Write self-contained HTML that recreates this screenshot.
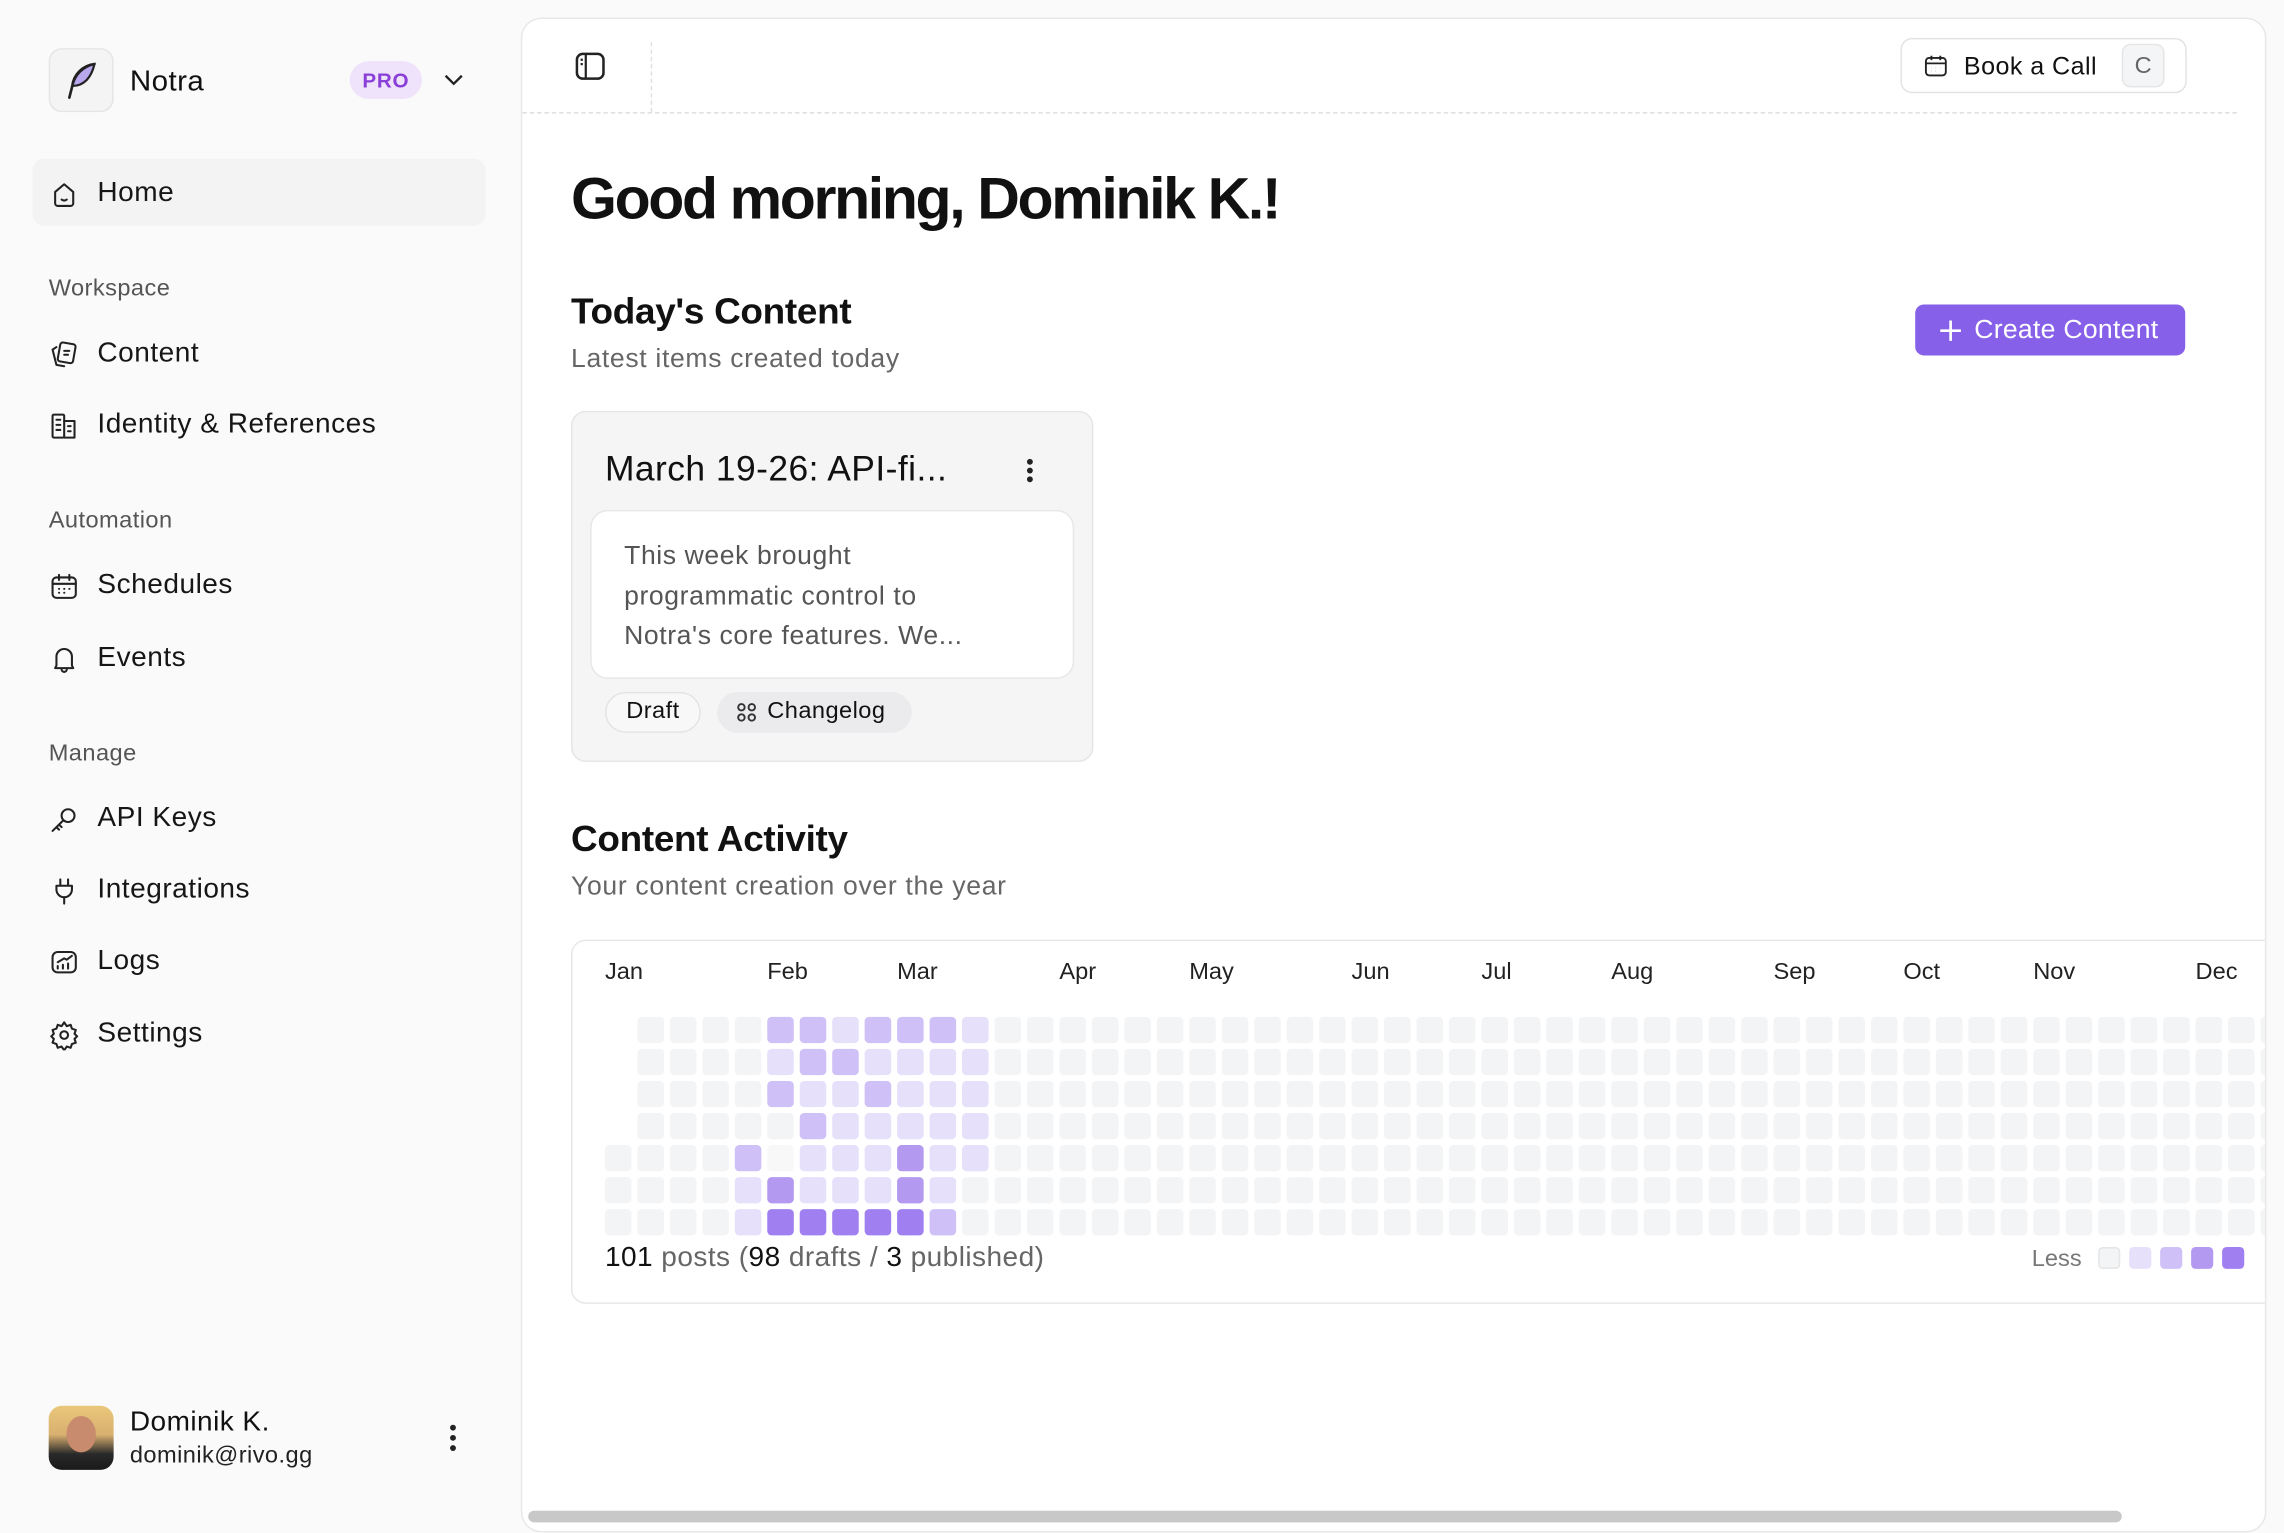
<!DOCTYPE html>
<html><head><meta charset="utf-8"><style>
*{box-sizing:border-box;margin:0;padding:0}
html,body{width:2284px;height:1518px;overflow:hidden;background:#fafafa}
#w{position:absolute;left:0;top:0;width:1548px;height:1042px;transform:scale(1.4755,1.4568);transform-origin:0 0;font-family:"Liberation Sans",sans-serif;color:#111}
.a{position:absolute}
.nav{position:absolute;left:33px;font-size:19px;color:#161616;display:flex;align-items:center;letter-spacing:.35px}
.nav svg{width:21px;height:21px;margin-right:12px;fill:none;stroke:#222;stroke-width:1.6;stroke-linecap:round;stroke-linejoin:round}
.sec{position:absolute;left:33px;font-size:16px;color:#555;letter-spacing:.3px}
#main{position:absolute;left:353px;top:12px;width:1183px;height:1040px;background:#fff;border:1px solid #e8e8e8;border-radius:14px;overflow:hidden}
.c{position:absolute;width:18px;height:18px;border-radius:3px;background:#f3f4f6}
</style></head><body><div id="w">
<div class="a" style="left:33px;top:33px;width:44px;height:44px;border:1px solid #e5e5e5;border-radius:9px;background:#f4f4f4"></div>
<svg class="a" style="left:42px;top:41px" width="26" height="28" viewBox="0 0 26 28"><path d="M22 3C14 4 8 10 7 18l-2 8" fill="none" stroke="#222" stroke-width="1.8" stroke-linecap="round"/><path d="M22 3C20 12 15 18 7 18C9 10 14 5 22 3Z" fill="#b9a7ee" stroke="#222" stroke-width="1.5"/></svg>
<div class="a" style="left:88px;top:45px;font-size:20px;letter-spacing:.3px">Notra</div>
<div class="a" style="left:237px;top:42px;width:49px;height:26px;border-radius:13px;background:#eee3fb;color:#8a3fd8;font-size:14px;font-weight:bold;text-align:center;line-height:26px;letter-spacing:.5px">PRO</div>
<svg class="a" style="left:300px;top:49px" width="15" height="12" viewBox="0 0 15 12"><path d="M2 3l5.5 5.5L13 3" fill="none" stroke="#222" stroke-width="1.6"/></svg>
<div class="a" style="left:22px;top:109px;width:307px;height:46px;background:#f3f3f3;border-radius:8px"></div>
<div class="nav" style="top:122px"><svg viewBox="0 0 24 24"><path d="M5 10l7-6 7 6v9a2 2 0 0 1-2 2H7a2 2 0 0 1-2-2z"/><path d="M10 16q2 1.5 4 0"/></svg>Home</div>
<div class="sec" style="top:190px">Workspace</div>
<div class="nav" style="top:232px"><svg viewBox="0 0 24 24"><rect x="8" y="3" width="12" height="15" rx="2" transform="rotate(10 14 10)"/><path d="M6 6L3 8l3 12 6 1"/><path d="M12 9h4M12 12h3"/></svg>Content</div>
<div class="nav" style="top:281px"><svg viewBox="0 0 24 24"><rect x="3" y="3" width="9" height="18" rx="1"/><path d="M12 8h8v13h-8M6 7h3M6 11h3M6 15h3M15 12h2M15 16h2"/></svg>Identity &amp; References</div>
<div class="sec" style="top:349px">Automation</div>
<div class="nav" style="top:391px"><svg viewBox="0 0 24 24"><rect x="3" y="5" width="18" height="16" rx="3"/><path d="M8 3v4M16 3v4M3 10h18M8 14h.1M12 14h.1M16 14h.1M8 17h.1M12 17h.1"/></svg>Schedules</div>
<div class="nav" style="top:441px"><svg viewBox="0 0 24 24"><path d="M6 17V10a6 6 0 0 1 12 0v7l1 2H5z"/><path d="M10 20a2 2 0 0 0 4 0"/></svg>Events</div>
<div class="sec" style="top:509px">Manage</div>
<div class="nav" style="top:551px"><svg viewBox="0 0 24 24"><circle cx="15" cy="9" r="5"/><path d="M11 13l-8 8M6 18l2 2M8 16l2 2"/></svg>API Keys</div>
<div class="nav" style="top:600px"><svg viewBox="0 0 24 24"><path d="M9 3v5M15 3v5M6 8h12v3a6 6 0 0 1-12 0zM12 17v5"/></svg>Integrations</div>
<div class="nav" style="top:649px"><svg viewBox="0 0 24 24"><rect x="3" y="4" width="18" height="16" rx="4"/><path d="M7 17v-2M11 17v-3M15 17v-4M7 12l5-3 2 1 4-3"/></svg>Logs</div>
<div class="nav" style="top:699px"><svg viewBox="0 0 24 24"><circle cx="12" cy="12" r="3"/><path d="M12 2l2 3 3-1 1 3 3 1-1 3 2 2-2 2 1 3-3 1-1 3-3-1-2 3-2-3-3 1-1-3-3-1 1-3-2-2 2-2-1-3 3-1 1-3 3 1z"/></svg>Settings</div>
<div class="a" style="left:33px;top:965px;width:44px;height:44px;border-radius:9px;background:linear-gradient(#e9c77a 0%,#d9b070 45%,#2a2a2a 75%,#1a1a1a);overflow:hidden"><div class="a" style="left:12px;top:7px;width:20px;height:25px;border-radius:50%;background:#c98b6d"></div></div>
<div class="a" style="left:88px;top:966px;font-size:19px;letter-spacing:.3px">Dominik K.</div>
<div class="a" style="left:88px;top:991px;font-size:16px;color:#222;letter-spacing:.3px">dominik@rivo.gg</div>
<div class="a" style="left:305px;top:978px;width:4px;height:4px;border-radius:2px;background:#222;box-shadow:0 7px 0 #222,0 14px 0 #222"></div>
<div id="main">
<svg class="a" style="left:35px;top:22px" width="22" height="22" viewBox="0 0 22 22"><rect x="2" y="2" width="18" height="17" rx="4" fill="none" stroke="#222" stroke-width="1.7"/><path d="M8 2v17M4.5 6h1.5M4.5 9h1.5" stroke="#222" stroke-width="1.5"/></svg>
<div class="a" style="left:87px;top:16px;height:48px;border-left:1px dashed #e0e0e0"></div>
<div class="a" style="left:0;top:64px;width:1162px;border-top:1px dashed #ddd"></div>
<div class="a" style="left:934px;top:13px;width:194px;height:38px;border:1px solid #e3e3e3;border-radius:8px"></div>
<svg class="a" style="left:949px;top:23px" width="18" height="18" viewBox="0 0 24 24" fill="none" stroke="#222" stroke-width="1.7"><rect x="3" y="5" width="18" height="16" rx="3"/><path d="M8 3v4M16 3v4M3 10h18M8 14h.1M12 14h.1M16 14h.1M8 17h.1M12 17h.1"/></svg>
<div class="a" style="left:977px;top:23px;font-size:17px;letter-spacing:.3px">Book a Call</div>
<div class="a" style="left:1084px;top:17px;width:29px;height:30px;border:1px solid #e5e5e5;border-radius:6px;background:#f4f5f6;color:#666;text-align:center;line-height:29px;font-size:16px">C</div>
<div class="a" style="left:33px;top:102px;font-size:40px;font-weight:bold;letter-spacing:-1.6px">Good morning, Dominik K.!</div>
<div class="a" style="left:33px;top:187px;font-size:25px;font-weight:bold;letter-spacing:-.2px">Today's Content</div>
<div class="a" style="left:33px;top:223px;font-size:18px;color:#666;letter-spacing:.45px">Latest items created today</div>
<div class="a" style="left:944px;top:196px;width:183px;height:35px;background:#8760e9;border-radius:6px;color:#fff;font-size:18px;line-height:35px;padding-left:40px;letter-spacing:.2px">Create Content</div>
<svg class="a" style="left:959px;top:205px" width="18" height="18"><path d="M9 2v14M2 9h14" stroke="#fff" stroke-width="1.8"/></svg>
<div class="a" style="left:33px;top:269px;width:354px;height:241px;background:#f5f5f6;border:1px solid #e5e5e7;border-radius:10px"></div>
<div class="a" style="left:56px;top:296px;font-size:24px;letter-spacing:.3px">March 19-26: API-fi...</div>
<div class="a" style="left:342px;top:302px;width:3.5px;height:3.5px;border-radius:2px;background:#222;box-shadow:0 6px 0 #222,0 12px 0 #222"></div>
<div class="a" style="left:46px;top:337px;width:328px;height:116px;background:#fff;border:1px solid #e7e7e9;border-radius:12px;padding:17px 60px 17px 22px;font-size:18px;line-height:27.5px;color:#555;letter-spacing:.4px;white-space:nowrap">This week brought<br>programmatic control to<br>Notra's core features. We...</div>
<div class="a" style="left:56px;top:462px;width:65px;height:28px;border:1px solid #e3e3e3;border-radius:14px;background:#f8f8f8;font-size:16px;text-align:center;line-height:26px;letter-spacing:.3px">Draft</div>
<div class="a" style="left:132px;top:462px;width:132px;height:28px;border-radius:14px;background:#ebebed;font-size:16px;line-height:28px;padding-left:34px;letter-spacing:.3px">Changelog</div>
<svg class="a" style="left:145px;top:469px" width="14" height="14" viewBox="0 0 14 14" fill="none" stroke="#333" stroke-width="1.3"><circle cx="3.5" cy="3.5" r="2.2"/><circle cx="10.5" cy="3.5" r="2.2"/><circle cx="3.5" cy="10.5" r="2.2"/><circle cx="10.5" cy="10.5" r="2.2"/></svg>
<div class="a" style="left:33px;top:549px;font-size:25px;font-weight:bold;letter-spacing:-.2px">Content Activity</div>
<div class="a" style="left:33px;top:585px;font-size:18px;color:#666;letter-spacing:.45px">Your content creation over the year</div>
<div class="a" style="left:33px;top:632px;width:1160px;height:250px;border:1px solid #e7e7e9;border-radius:10px;overflow:hidden">
<div class="a" style="top:13px;left:22px;font-size:16px;color:#222;width:1200px">
<span class="a" style="left:0">Jan</span><span class="a" style="left:110px">Feb</span><span class="a" style="left:198px">Mar</span><span class="a" style="left:308px">Apr</span><span class="a" style="left:396px">May</span><span class="a" style="left:506px">Jun</span><span class="a" style="left:594px">Jul</span><span class="a" style="left:682px">Aug</span><span class="a" style="left:792px">Sep</span><span class="a" style="left:880px">Oct</span><span class="a" style="left:968px">Nov</span><span class="a" style="left:1078px">Dec</span></div>
<div id="cells"></div>
<div class="a" style="left:22px;top:207px;font-size:19px;color:#666;letter-spacing:.3px"><span style="color:#111">101</span> posts (<span style="color:#111">98</span> drafts / <span style="color:#111">3</span> published)</div>
<div class="a" style="left:989px;top:210px;font-size:16px;color:#777">Less</div>
<div class="a" style="left:1034px;top:210px;width:15px;height:15px;border-radius:3px;background:#f3f4f6;border:1px solid #e5e5e5"></div>
<div class="a" style="left:1055px;top:210px;width:15px;height:15px;border-radius:3px;background:#e6e0fb"></div>
<div class="a" style="left:1076px;top:210px;width:15px;height:15px;border-radius:3px;background:#cfc1f7"></div>
<div class="a" style="left:1097px;top:210px;width:15px;height:15px;border-radius:3px;background:#b39af0"></div>
<div class="a" style="left:1118px;top:210px;width:15px;height:15px;border-radius:3px;background:#a07ff0"></div>
</div>
<div class="a" style="left:4px;top:1024px;width:1080px;height:8px;border-radius:4px;background:#c8c8c8"></div>
</div>
<script>
var g='#f3f4f6',L='#e6e0fb',M='#cfc1f7',D='#b39af0',X='#a07ff0';
var rows=[
{5:M,6:M,7:L,8:M,9:M,10:M,11:L},
{5:L,6:M,7:M,8:L,9:L,10:L,11:L},
{5:M,6:L,7:L,8:M,9:L,10:L,11:L},
{6:M,7:L,8:L,9:L,10:L,11:L},
{4:M,5:'#f8f8f9',6:L,7:L,8:L,9:D,10:L,11:L},
{4:L,5:D,6:L,7:L,8:L,9:D,10:L},
{4:L,5:X,6:X,7:X,8:X,9:X,10:M}];
var h='';
for(var r=0;r<7;r++){for(var c=0;c<52;c++){if(c==0&&r<4)continue;
var col=rows[r][c]||g;h+='<div class="c" style="left:'+(22+c*22)+'px;top:'+(52+r*22)+'px;background:'+col+'"></div>';}}
document.getElementById('cells').innerHTML=h;
</script>
</div></body></html>
